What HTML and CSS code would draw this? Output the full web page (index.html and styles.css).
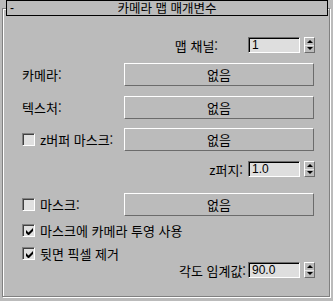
FILE: index.html
```html
<!DOCTYPE html>
<html lang="ko">
<head>
    <meta charset="UTF-8">
    <title>카메라 맵 매개변수</title>
    <link rel="stylesheet" href="styles.css">
</head>
<body>
    <div class="rollout">
        <div class="rollout-title">
            <span class="collapse">-</span>
            <span class="title-text">카메라 맵 매개변수</span>
            <span></span>
        </div>

        <div class="rollout-body">
            <div class="row spin-row row-channel">
                <span class="spin-label label-channel">맵 채널:</span>
                <div class="spinner">
                    <span class="spin-field">1</span>
                    <span class="spin-arrows"><span class="arrow up"></span><span class="arrow down"></span></span>
                </div>
            </div>

            <div class="row btn-row row-camera">
                <span class="row-label">카메라:</span>
                <button class="map-btn">없음</button>
            </div>

            <div class="row btn-row row-texture">
                <span class="row-label">텍스처:</span>
                <button class="map-btn">없음</button>
            </div>

            <div class="row btn-row row-zbuffer">
                <span class="row-label"><span class="check"></span>z버퍼 마스크:</span>
                <button class="map-btn">없음</button>
            </div>

            <div class="row spin-row row-zblur">
                <span class="spin-label label-zblur">z퍼지:</span>
                <div class="spinner">
                    <span class="spin-field">1.0</span>
                    <span class="spin-arrows"><span class="arrow up"></span><span class="arrow down"></span></span>
                </div>
            </div>

            <div class="row btn-row row-mask">
                <span class="row-label"><span class="check"></span>마스크:</span>
                <button class="map-btn">없음</button>
            </div>

            <div class="row check-row row-project">
                <span class="check checked">
                    <svg width="7" height="7" viewBox="0 0 7 7"><path d="M0 2v3l2 2h1l4-4V0L2.5 4.5z" fill="#000"/></svg>
                </span>
                마스크에 카메라 투영 사용
            </div>

            <div class="row check-row row-backface">
                <span class="check checked">
                    <svg width="7" height="7" viewBox="0 0 7 7"><path d="M0 2v3l2 2h1l4-4V0L2.5 4.5z" fill="#000"/></svg>
                </span>
                뒷면 픽셀 제거
            </div>

            <div class="row spin-row row-angle">
                <span class="spin-label label-angle">각도 임계값:</span>
                <div class="spinner">
                    <span class="spin-field">90.0</span>
                    <span class="spin-arrows"><span class="arrow up"></span><span class="arrow down"></span></span>
                </div>
            </div>
        </div>
    </div>
</body>
</html>
```

FILE: styles.css
```css
body {
    margin: 0;
    width: 333px;
    height: 301px;
    overflow: hidden;
    background-color: #bbbbbb;
    font-family: "Noto Sans CJK KR", "Noto Sans", sans-serif;
    font-size: 13px;
    color: #000;
}

.rollout {
    padding: 0 3px 0 2px;
}

.rollout-title {
    position: relative;
    z-index: 1;
    margin: 0 2px 0 4px;
    height: 16px;
    box-sizing: border-box;
    border: 1px solid #000;
    background-color: #bbbbbb;
    display: grid;
    grid-template-columns: 1fr auto 1fr;
    align-items: center;
}

.title-text {
    font-size: 12.5px;
    line-height: 14px;
}

.collapse {
    padding-left: 3px;
    font-family: "Liberation Sans", Arial, sans-serif;
    font-size: 12px;
    line-height: 14px;
}

.rollout-body {
    margin-top: -8px;
    height: 289px;
    box-sizing: border-box;
    border: 1px solid #808080;
    box-shadow: inset 1px 1px 0 #fff, 1px 1px 0 #fff;
    padding: 28px 14px 0 19px;
}

.row {
    display: flex;
    align-items: center;
}

.spin-row {
    justify-content: flex-end;
    height: 16px;
}

.btn-row {
    height: 23px;
    padding-right: 1px;
}

.check-row {
    height: 13px;
}

.row-label {
    width: 102px;
    display: flex;
    align-items: center;
}

.row-camera { margin-top: 10px; }
.row-texture { margin-top: 10px; }
.row-zbuffer { margin-top: 9px; }
.row-zblur { margin-top: 10px; }
.row-mask { margin-top: 16px; }
.row-project { margin-top: 8px; }
.row-backface { margin-top: 10px; }
.row-angle { margin-top: 2px; }

.label-channel { margin-right: 30px; }
.label-zblur { margin-right: 5px; }
.label-angle { margin-right: 2px; }

.map-btn {
    flex: 1;
    height: 23px;
    padding: 0;
    background-color: #bbbbbb;
    border: 1px solid;
    border-color: #fff #6b6b6b #6b6b6b #fff;
    font-family: inherit;
    font-size: 13px;
    color: #000;
}

.spinner {
    display: flex;
    gap: 4px;
}

.spin-field {
    width: 52px;
    height: 16px;
    box-sizing: border-box;
    border: 1px solid;
    border-color: #6d6d6d #fff #fff #6d6d6d;
    box-shadow: inset 1px 1px 0 #000;
    background-color: #dedede;
    padding-left: 3px;
    font-family: "Liberation Sans", Arial, sans-serif;
    font-size: 12px;
    line-height: 15px;
}

.spin-arrows {
    width: 11px;
    height: 16px;
    box-sizing: border-box;
    display: flex;
    flex-direction: column;
    border: 1px solid;
    border-color: #fff #6b6b6b #6b6b6b #fff;
}

.arrow {
    flex: 1;
    display: flex;
    align-items: center;
    justify-content: center;
}

.arrow::before {
    content: "";
    border-left: 3px solid transparent;
    border-right: 3px solid transparent;
}

.arrow.up {
    border-bottom: 1px solid #e6e6e6;
}

.arrow.up::before {
    border-bottom: 3px solid #000;
}

.arrow.down::before {
    border-top: 3px solid #000;
}

.check {
    width: 13px;
    height: 13px;
    box-sizing: border-box;
    border: 1px solid;
    border-color: #808080 #fff #fff #808080;
    box-shadow: inset 1px 1px 0 #404040;
    background-color: #e0e0e0;
    margin-right: 5px;
    display: flex;
    align-items: center;
    justify-content: center;
    flex-shrink: 0;
}

.check svg {
    display: block;
    margin: 1px 0 0 1px;
}
```
